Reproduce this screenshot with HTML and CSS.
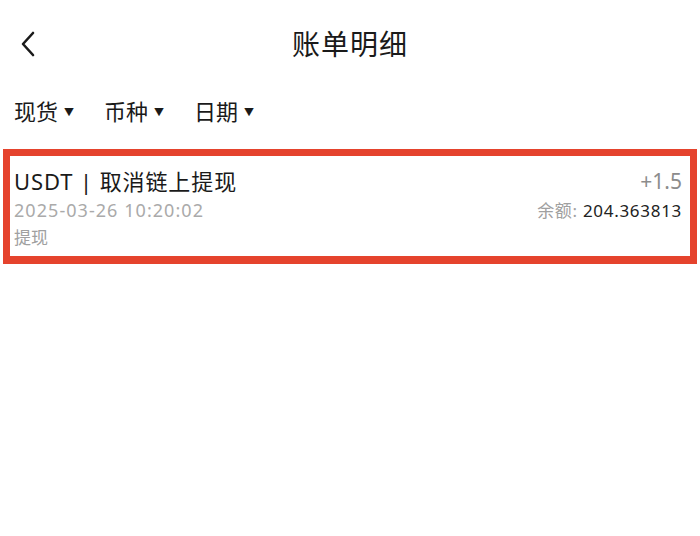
FILE: index.html
```html
<!DOCTYPE html>
<html lang="zh-CN">
  <head>
    <meta charset="UTF-8" />
    <meta name="viewport" content="width=device-width, initial-scale=1.0"/>
    <title>账单明细</title>
    <link rel="stylesheet" href="styles.css">
  </head>

  <body>
    <header class="top-bar">
      <div class="back">
        <svg width="16" height="26" viewBox="0 0 16 26">
          <path d="M13 2 L3 13 L13 24" fill="none" stroke="#1a1a1a" stroke-width="2.6" stroke-linecap="round" stroke-linejoin="round"/>
        </svg>
      </div>
      <h1 class="title">账单明细</h1>
      <div></div>
    </header>

    <div class="filters">
      <div class="filter">现货<span class="arrow">▼</span></div>
      <div class="filter">币种<span class="arrow">▼</span></div>
      <div class="filter">日期<span class="arrow">▼</span></div>
    </div>

    <div class="record">
      <div class="row">
        <div class="name">USDT | 取消链上提现</div>
        <div class="amount">+1.5</div>
      </div>
      <div class="row">
        <div class="time">2025-03-26 10:20:02</div>
        <div class="balance"><span class="label">余额:</span> 204.363813</div>
      </div>
      <div class="row">
        <div class="type">提现</div>
      </div>
    </div>
  </body>
</html>
```

FILE: styles.css
```css
body {
  margin: 0;
  font-family: "Noto Sans", "Noto Sans CJK SC", sans-serif;
  background-color: #fff;
  color: #1a1a1a;
  width: 700px;
  height: 536px;
  overflow: hidden;
}

.top-bar {
  display: grid;
  grid-template-columns: 1fr auto 1fr;
  align-items: center;
  height: 88px;
}

.back {
  display: flex;
  align-items: center;
  padding-left: 20px;
}

.title {
  margin: 0;
  font-size: 28px;
  font-weight: 400;
  letter-spacing: 1px;
  line-height: 40px;
}

.filters {
  display: flex;
  align-items: center;
  gap: 30px;
  padding-left: 14px;
  height: 46px;
  font-size: 22px;
}

.filter {
  display: flex;
  align-items: center;
  line-height: 30px;
}

.arrow {
  font-size: 10px;
  margin-left: 6px;
  margin-top: 2px;
}

.record {
  margin: 15px 3px 0;
  border: 7px solid #e5432d;
  border-bottom-width: 8px;
  padding: 10px 8px 5px 4px;
}

.row {
  display: flex;
  justify-content: space-between;
  align-items: center;
}

.name {
  font-size: 22px;
  line-height: 30px;
  letter-spacing: 0.9px;
}

.amount {
  font-size: 21px;
  line-height: 30px;
  color: #8c8c8c;
}

.time {
  font-size: 18px;
  line-height: 29px;
  letter-spacing: 1.05px;
  color: #aaa;
}

.balance {
  font-size: 17px;
  line-height: 29px;
  letter-spacing: 0.7px;
  color: #222;
}

.label {
  color: #a0a0a0;
}

.type {
  font-size: 17px;
  line-height: 26px;
  color: #a0a0a0;
}
```
